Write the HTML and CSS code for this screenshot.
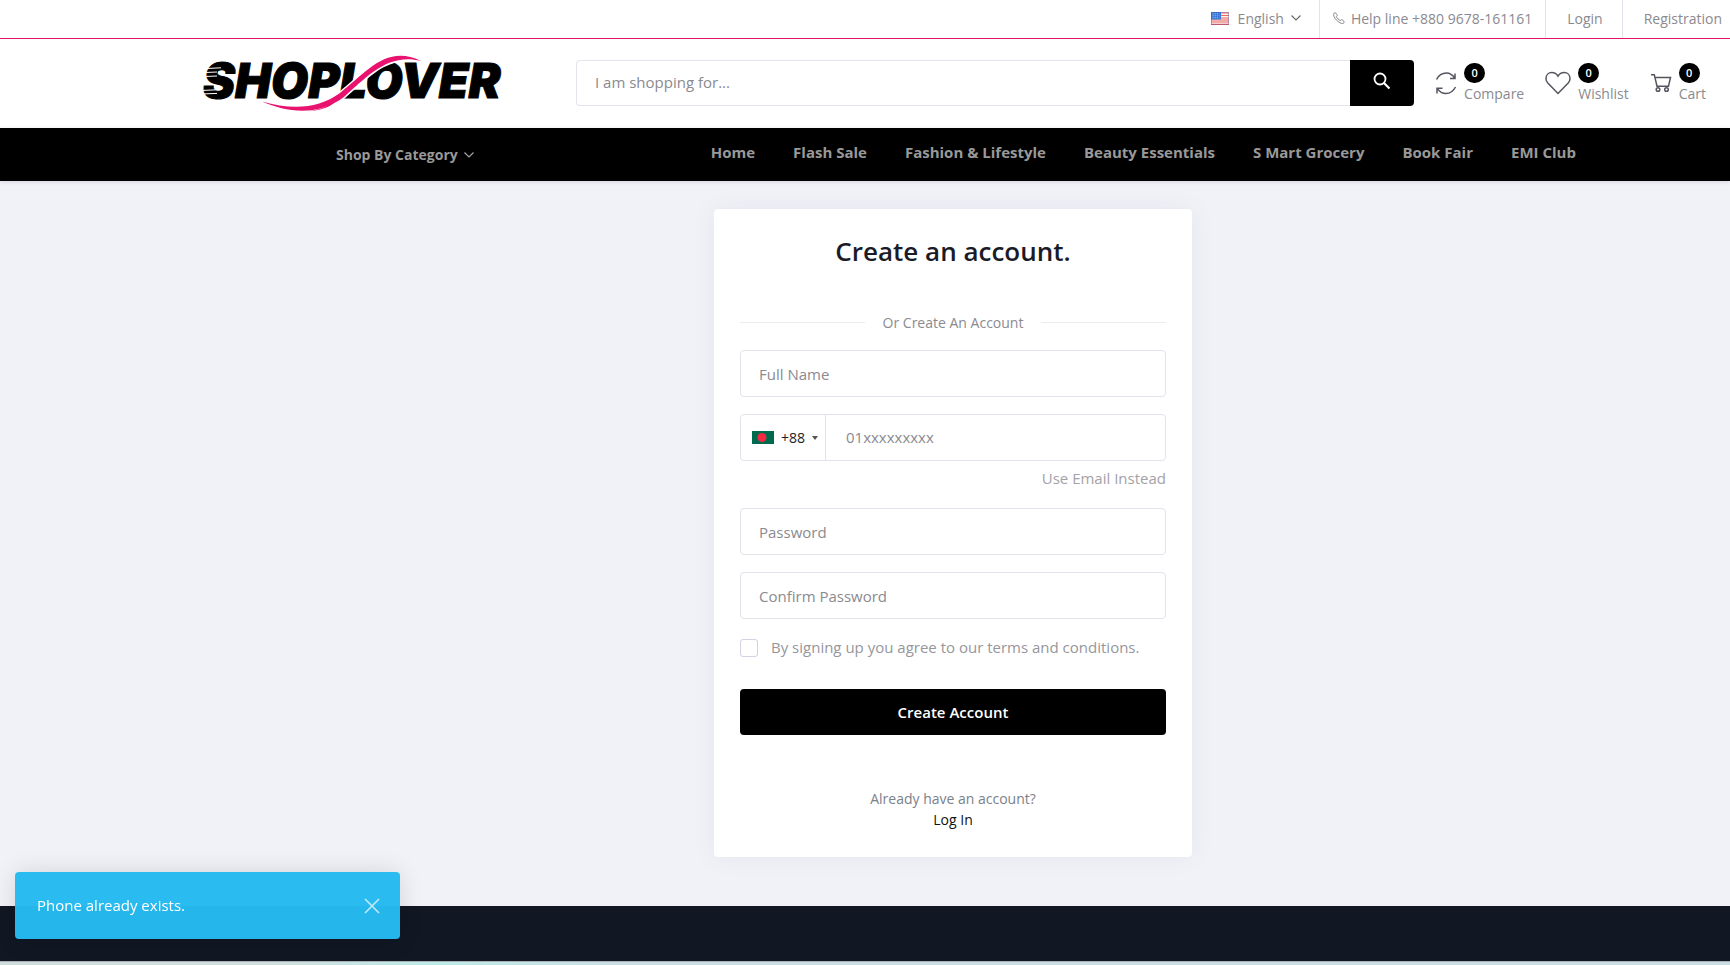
FILE: index.html
```html
<!DOCTYPE html>
<html lang="en">
<head>
<meta charset="utf-8">
<title>Create an account</title>
<link rel="stylesheet" href="styles.css">
</head>
<body>
<div class="topbar">
  <button class="lang" type="button">
    <svg class="flag-us" width="18" height="13" viewBox="0 0 18 13" aria-hidden="true">
      <rect width="18" height="13" fill="#f7f1f1"/>
      <path d="M0 1h18M0 3.500h18M0 6h18M0 8h18M0 10h18M0 12.300h18" stroke="#f0655f" stroke-width="1.200"/>
      <rect width="10" height="7.500" fill="#3a78d8"/>
      <path d="M1.500 1.700h7M1.500 3.700h7M1.500 5.700h7" stroke="#b9d4fa" stroke-width=".8" stroke-dasharray="1 1.200"/>
      <rect x=".5" y=".5" width="17" height="12" fill="none" stroke="#4a4a8a" stroke-opacity=".35"/>
    </svg>
    <span>English</span>
    <svg width="10" height="6" viewBox="0 0 10 6" aria-hidden="true"><path d="M.5.5 5 5 9.500.5" fill="none" stroke="#666" stroke-width="1.100"/></svg>
  </button>
  <a class="help" href="#">
    <svg width="12" height="12" viewBox="0 0 12 12" aria-hidden="true"><path d="M2.300.7 4 2.700c.4.500.3.900-.1 1.300l-.5.600c.6 1.500 2.300 3.200 3.900 3.900l.7-.5c.4-.4.900-.4 1.300-.1l1.700 1.500c.4.400.4.800.1 1.200-1 1.100-2.300 1.100-3.700.4C4.600 9.600 2.100 7.100 1 4.500.4 3 .5 1.900 1.500.8c.3-.3.600-.3.800-.1z" fill="none" stroke="#777" stroke-width=".9"/></svg>
    <span>Help line +880 9678-161161</span>
  </a>
  <a class="toplink" href="#">Login</a>
  <a class="toplink last" href="#">Registration</a>
</div>

<header class="header">
  <a class="logo" href="#" aria-label="Shoplover">
    <svg width="304" height="64" viewBox="0 0 304 64" aria-hidden="true">
      <text class="wordmark" x="3" y="47">SHOPLOVER</text>
      <path d="M6 17.500l15-.7M5 21.500l12-.5M5 25.500l12-.5M1 39.500l18-.8M1 43l16-.6" stroke="#fff" stroke-width="1"/>
      <path d="M62 50.500C92 59 118 58 140 42 166 22 186-7 221 10 188 2 168 25 144 46 118 65 88 62 62 50.500z" fill="#e9126f" stroke="#fff" stroke-width="3" paint-order="stroke"/>
      <path d="M107 60c14-1 25-6 32-15.500-3 10.500-18 15.500-32 15.500z" fill="#e9126f"/>
    </svg>
  </a>
  <form class="search" role="search">
    <input class="search-input" type="text" placeholder="I am shopping for..." aria-label="Search">
    <button class="search-btn" type="button" aria-label="Search">
      <svg width="18" height="18" viewBox="0 0 18 18" aria-hidden="true"><circle cx="7" cy="7" r="5.500" fill="none" stroke="#fff" stroke-width="1.800"/><path d="m11 11 5.500 5.500" stroke="#fff" stroke-width="2.200"/></svg>
    </button>
  </form>
  <nav class="actions" aria-label="Shopping">
    <a class="action" href="#">
      <svg width="22" height="24" viewBox="0 0 22 24" fill="none" stroke="#555560" stroke-width="1.500" aria-hidden="true"><path d="M1.500 8.500C4 3.500 8 2 11.500 2c3.500 0 6 1.800 8.300 5.200M20 2.500v5h-5M20.500 16c-2.500 5-6 6.500-9.500 6.500S4.500 20.700 2.200 17.300M2 22.500v-5.300h5.500"/></svg>
      <span class="action-text"><span class="badge">0</span><span>Compare</span></span>
    </a>
    <a class="action" href="#">
      <svg width="26" height="24" viewBox="0 0 26 24" fill="none" stroke="#555560" stroke-width="1.500" aria-hidden="true"><path d="M13 22.500 2.800 12C1.500 10.600 1 9 1 7.700 1 4 3.500 1.500 6.800 1.500c2.700 0 4.700 1.200 6.200 3.700 1.500-2.500 3.500-3.700 6.200-3.700C22.500 1.500 25 4 25 7.700c0 1.300-.5 2.900-1.800 4.300z"/></svg>
      <span class="action-text"><span class="badge">0</span><span>Wishlist</span></span>
    </a>
    <a class="action" href="#">
      <svg width="22" height="24" viewBox="0 0 22 24" fill="none" stroke="#555560" stroke-width="1.500" aria-hidden="true"><path d="M1 3.700h3.300L7 15.200h11.500l2-8.700H5"/><circle cx="8" cy="18.500" r="1.800"/><circle cx="16.500" cy="18.500" r="1.800"/></svg>
      <span class="action-text"><span class="badge">0</span><span>Cart</span></span>
    </a>
  </nav>
</header>

<nav class="navbar" aria-label="Main">
  <button class="category" type="button">
    <span>Shop By Category</span>
    <svg width="10" height="6" viewBox="0 0 10 6" aria-hidden="true"><path d="M.5.5 5 5 9.500.5" fill="none" stroke="#aaa" stroke-width="1.100"/></svg>
  </button>
  <div class="nav-links">
    <a href="#">Home</a>
    <a href="#">Flash Sale</a>
    <a href="#">Fashion &amp; Lifestyle</a>
    <a href="#">Beauty Essentials</a>
    <a href="#">S Mart Grocery</a>
    <a href="#">Book Fair</a>
    <a href="#">EMI Club</a>
  </div>
</nav>

<main class="main">
  <section class="card">
    <h1 class="title">Create an account.</h1>
    <div class="divider"><span>Or Create An Account</span></div>
    <form class="form">
      <input class="field" type="text" placeholder="Full Name" aria-label="Full Name">
      <div class="phone">
        <button class="dial" type="button" aria-label="Country code">
          <svg width="22" height="13" viewBox="0 0 22 13" aria-hidden="true"><rect width="22" height="13" fill="#006a4e"/><circle cx="10" cy="6.500" r="4.500" fill="#f42a41"/></svg>
          <span>+88</span>
          <svg width="6" height="4" viewBox="0 0 6 4" aria-hidden="true"><path d="M0 0h6L3 4z" fill="#555"/></svg>
        </button>
        <input class="phone-input" type="tel" placeholder="01xxxxxxxxx" aria-label="Phone">
      </div>
      <button class="swap" type="button">Use Email Instead</button>
      <input class="field" type="password" placeholder="Password" aria-label="Password">
      <input class="field" type="password" placeholder="Confirm Password" aria-label="Confirm Password">
      <label class="terms"><input type="checkbox"><span>By signing up you agree to our terms and conditions.</span></label>
      <button class="submit" type="button">Create Account</button>
    </form>
    <div class="signin">
      <p>Already have an account?</p>
      <a href="#">Log In</a>
    </div>
  </section>
</main>

<footer class="footer"></footer>
<div class="strip"></div>

<div class="toast" role="alert">
  <span>Phone already exists.</span>
  <button class="close" type="button" aria-label="Close">
    <svg width="16" height="16" viewBox="0 0 16 16" aria-hidden="true"><path d="m1 1 14 14M15 1 1 15" stroke="#fff" stroke-opacity=".7" stroke-width="1.600"/></svg>
  </button>
</div>
</body>
</html>
```

FILE: styles.css
```css
* { box-sizing: border-box; }

body {
  margin: 0;
  min-height: 100vh;
  display: flex;
  flex-direction: column;
  background: #f1f2f7;
  color: #8a8a90;
  font-family: "Open Sans", "Noto Sans", sans-serif;
  font-size: 14px;
  line-height: 21px;
}

a { color: inherit; text-decoration: none; }
button, input { font: inherit; color: inherit; }
button { border: 0; padding: 0; background: none; cursor: pointer; }
svg { display: block; flex: none; }

.topbar {
  display: flex;
  justify-content: flex-end;
  height: 39px;
  background: #fff;
  border-bottom: 1px solid #e3106e;
}
.lang, .help, .toplink { display: flex; align-items: center; padding-bottom: 2px; white-space: nowrap; }
.lang { gap: 9px; padding-right: 18px; }
.lang svg:last-child { margin-left: -2px; }
.help { gap: 6px; padding-left: 13px; padding-right: 13px; border-left: 1px solid #e2e2ea; }
.toplink { padding-left: 21px; padding-right: 19px; border-left: 1px solid #e2e2ea; }
.toplink.last { padding-right: 8px; }

.header {
  display: flex;
  align-items: center;
  height: 89px;
  padding: 0 24px 2px 200px;
  background: #fff;
}
.logo { flex: none; margin-right: 72px; }
.wordmark {
  font-family: Inter, sans-serif;
  font-size: 48px;
  font-weight: 900;
  font-style: italic;
  fill: #000;
  stroke: #000;
  stroke-width: 1px;
}
.logo svg { overflow: visible; }
.search { display: flex; flex: 1; height: 46px; margin-right: 21px; }
.search-input {
  flex: 1;
  min-width: 0;
  padding: 0 18px;
  border: 1px solid #e2e5ec;
  border-right: 0;
  border-radius: 4px 0 0 4px;
  background: #fff;
  font-size: 15px;
}
.search-btn {
  width: 64px;
  display: flex;
  align-items: center;
  justify-content: center;
  padding-bottom: 4px;
  border-radius: 0 4px 4px 0;
  background: #000;
}
::placeholder { color: #8a8a90; opacity: 1; }
.actions { display: flex; gap: 21px; }
.action { display: flex; align-items: center; gap: 7px; }
.action-text { display: flex; flex-direction: column; align-items: flex-start; padding-top: 2px; }
.badge {
  width: 21px;
  height: 20px;
  border-radius: 10px;
  background: #000;
  color: #fff;
  font-size: 11px;
  font-weight: 600;
  line-height: 20px;
  text-align: center;
}

.navbar {
  display: flex;
  height: 53px;
  padding-left: 336px;
  background: #000;
  color: #999;
  font-weight: 700;
  box-shadow: 0 1px 4px rgba(60, 40, 100, .15);
}
.category { display: flex; align-items: center; gap: 6px; }
.nav-links {
  display: flex;
  align-items: center;
  gap: 38px;
  margin-left: 237px;
  padding-bottom: 4px;
  font-size: 15px;
  white-space: nowrap;
}

.main { flex: 1; padding: 28px 0 49px 176px; }
.card {
  width: 478px;
  margin: 0 auto;
  padding: 26px 26px 27px;
  border-radius: 4px;
  background: #fff;
  box-shadow: 0 0 24px rgba(80, 60, 140, .07);
}
.title {
  margin: 0 0 45px;
  color: #1b1b28;
  font-size: 26px;
  font-weight: 600;
  line-height: 32px;
  text-align: center;
}
.divider { display: flex; align-items: center; margin-bottom: 17px; }
.divider::before, .divider::after { content: ""; flex: 1; height: 1px; background: #ececf0; }
.divider span { padding: 0 18px; }
.form { display: flex; flex-direction: column; font-size: 15px; }
.field, .phone {
  width: 100%;
  height: 47px;
  margin-bottom: 17px;
  border: 1px solid #e2e2ea;
  border-radius: 4px;
  background: #fff;
}
.field { padding: 0 18px; }
.phone { display: flex; margin-bottom: 7px; }
.dial {
  display: flex;
  align-items: center;
  gap: 7px;
  width: 85px;
  padding-left: 11px;
  border-right: 1px solid #e2e2ea;
  color: #222;
  font-size: 14px;
}
.phone-input { flex: 1; min-width: 0; border: 0; padding: 0 20px; background: none; }
.swap { align-self: flex-end; margin-bottom: 19px; color: #a2a2a7; }
.terms { display: flex; align-items: center; gap: 13px; margin: 1px 0 31px; color: #96969b; }
.terms input {
  appearance: none;
  width: 18px;
  height: 18px;
  margin: 0;
  border: 1px solid #cfd3e2;
  border-radius: 3px;
  background: #fff;
}
.submit { height: 46px; border-radius: 4px; background: #000; color: #fff; font-weight: 600; }
.signin { margin-top: 53px; color: #7b808a; text-align: center; }
.signin p { margin: 0; }
.signin a { color: #111; }

.footer { height: 55px; background: #111723; }
.strip {
  height: 5px;
  border-top: 1px solid #a9b0b2;
  background: linear-gradient(90deg, #cfdedd 0 16%, #bdebe8 25%, #cadfe4 35%, #cadfe4);
}

.toast {
  position: fixed;
  left: 15px;
  bottom: 26px;
  display: flex;
  align-items: center;
  justify-content: space-between;
  width: 385px;
  height: 67px;
  padding: 0 20px 0 22px;
  border-radius: 4px;
  background: rgba(38, 187, 240, .98);
  box-shadow: 0 0 24px rgba(0, 0, 0, .12);
  color: #fff;
  font-size: 15px;
}
```
